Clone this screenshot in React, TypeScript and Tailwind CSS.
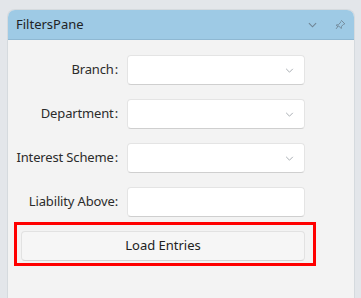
import React from "react";

const fields = [
  { label: "Branch", gap: true, select: true },
  { label: "Department", gap: true, select: true },
  { label: "Interest Scheme", gap: true, select: true },
  { label: "Liability Above", gap: false, select: false },
];

function Chevron({ className }: { className?: string }) {
  return (
    <svg viewBox="0 0 10 6" className={className} fill="none">
      <path d="M1 1l4 4 4-4" stroke="currentColor" strokeWidth="1.2" />
    </svg>
  );
}

function PinIcon() {
  return (
    <svg viewBox="0 0 12 12" className="h-[12px] w-[12px] text-[#6f8494]" fill="none">
      <path
        d="M7.2 1.2l3.6 3.6-1.4.6-1.9 1.9-.3 2.2-1-1L4.4 6.7 2.1 9.9M4.2 8l-2-2 2.2-.3 1.9-1.9.6-1.4"
        stroke="currentColor"
        strokeWidth="0.9"
        strokeLinejoin="round"
      />
    </svg>
  );
}

export default function App() {
  return (
    <div className="h-[298px] w-[361px] overflow-hidden bg-[#e3e6ea] pl-[7px] pt-[9px] font-['Noto_Sans',sans-serif]">
      <div className="flex h-[289px] w-[348px] flex-col rounded-t-[8px] border border-b-0 border-[#d5dade] bg-[#f3f3f3]">
        <div className="flex h-[30px] items-center rounded-t-[7px] border-b border-[#8fb8d2] bg-[#9ecae5] pl-[8px] pr-[8px]">
          <span className="text-[13px] text-[#1f2326]">FiltersPane</span>
          <div className="ml-auto flex items-center gap-[17px]">
            <Chevron className="h-[6px] w-[9px] text-[#6f8494]" />
            <PinIcon />
          </div>
        </div>

        <div className="grid grid-cols-[110px_178px] gap-x-[9px] gap-y-[14px] pt-[15px]">
          {fields.map((f) => (
            <React.Fragment key={f.label}>
              <div className="flex h-[30px] items-center justify-end whitespace-nowrap text-[13px] tracking-[-0.15px] text-[#2b2b2b]">
                {f.label}
                <span className={f.gap ? "ml-[1px]" : ""}>:</span>
              </div>
              <div className="flex h-[30px] items-center justify-end rounded-[4px] border border-[#e4e4e4] border-b-[#cfcfcf] bg-white pr-[10px]">
                {f.select && <Chevron className="h-[5px] w-[9px] text-[#a9aeb3]" />}
              </div>
            </React.Fragment>
          ))}
        </div>

        <div className="relative ml-[13px] mt-[14px] w-[284px]">
          <button className="flex h-[30px] w-full items-center justify-center rounded-[4px] border border-[#e2e2e2] border-b-[#d2d2d2] bg-[#f6f6f6] text-[13px] text-[#222]">
            Load Entries
          </button>
          <div className="pointer-events-none absolute -left-[7px] -top-[9px] h-[44px] w-[302px] border-[3px] border-[#ff0000]" />
        </div>
      </div>
    </div>
  );
}
